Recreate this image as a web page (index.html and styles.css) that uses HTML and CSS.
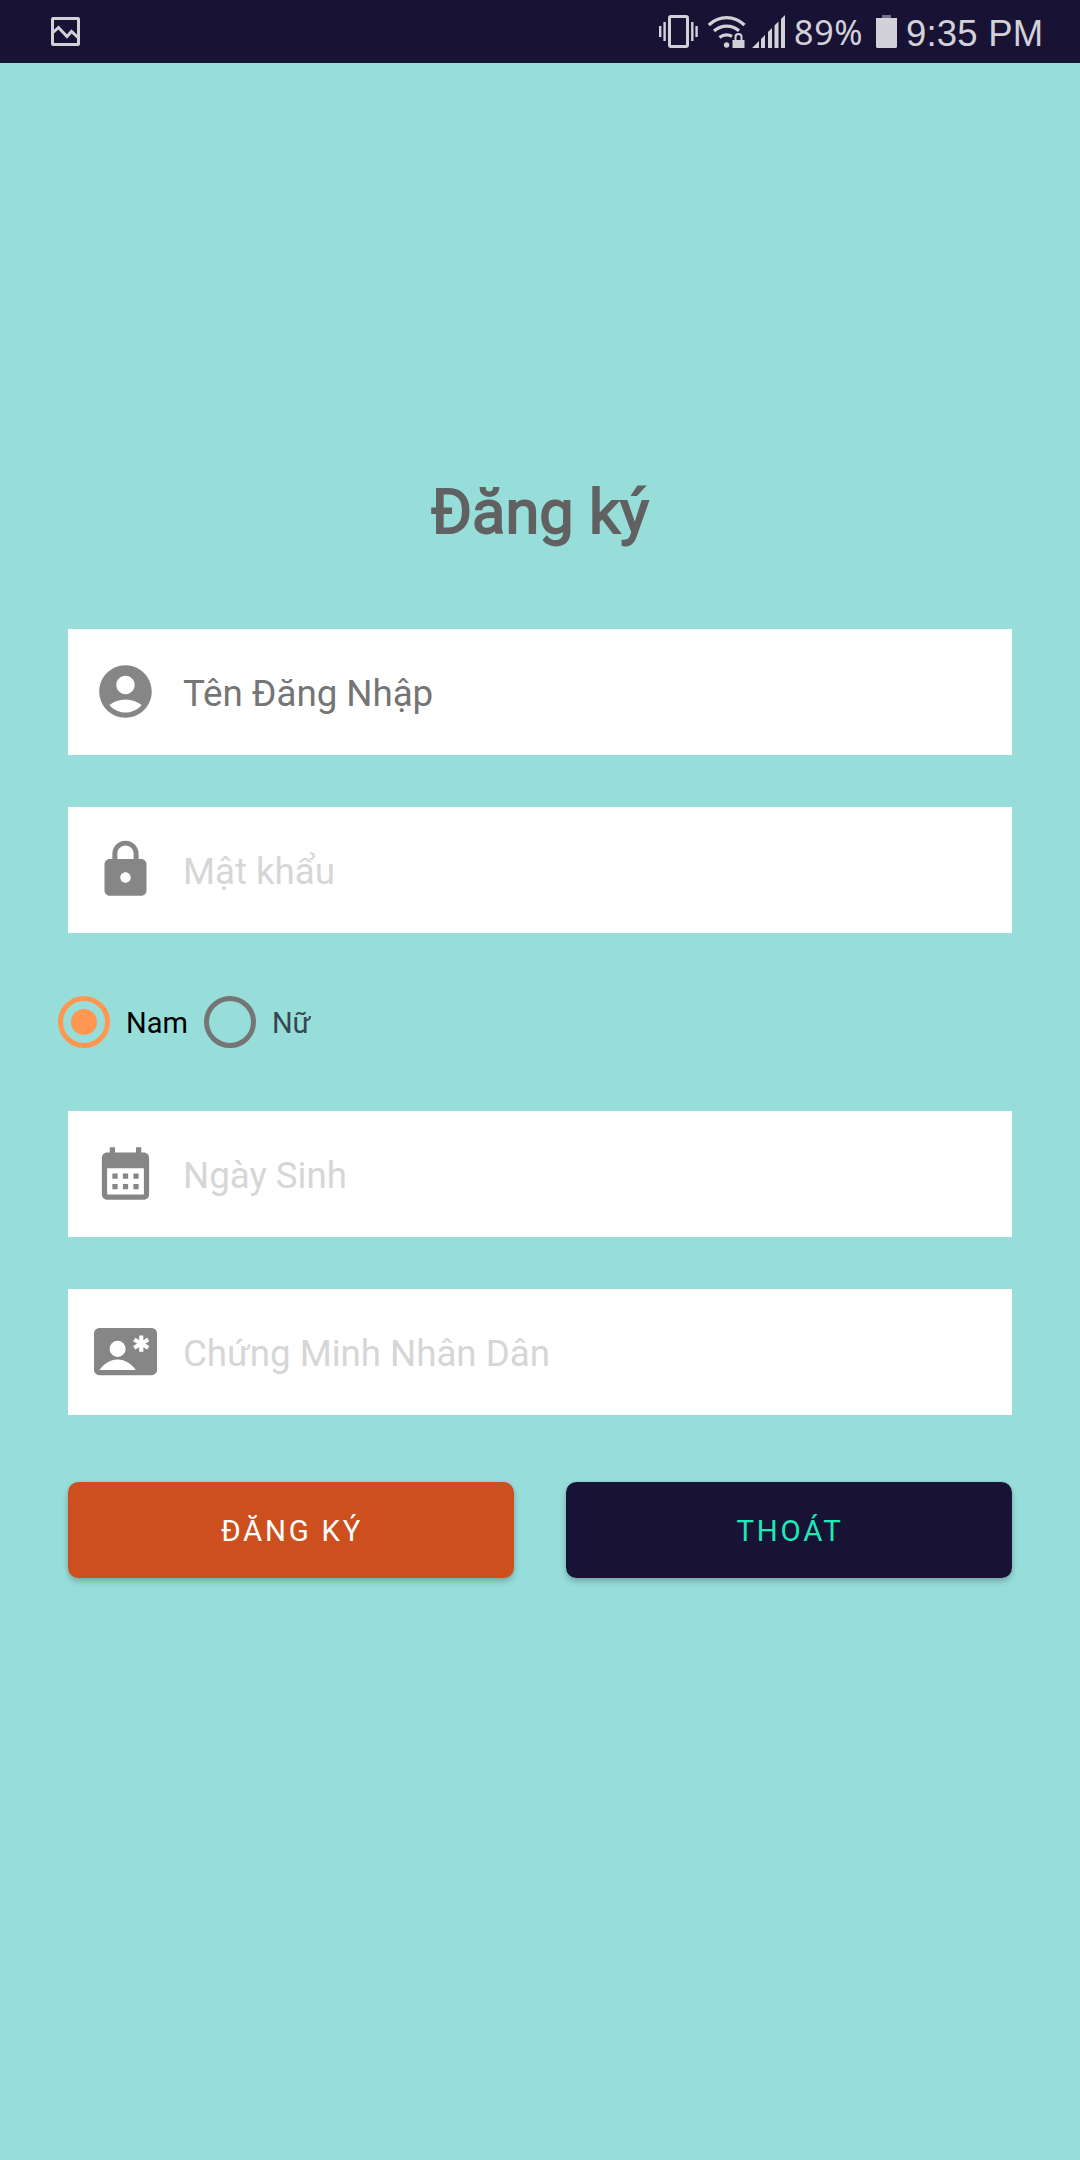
FILE: index.html
```html
<!DOCTYPE html>
<html lang="vi">
<head>
<meta charset="utf-8">
<title>Đăng ký</title>
<link rel="stylesheet" href="styles.css">
</head>
<body>
<header class="status">
  <svg class="status-picture" width="29" height="29" viewBox="0 0 29 29" fill="none" stroke="currentColor" stroke-width="3"><rect x="1.5" y="1.5" width="26" height="26" rx=".5"/><path d="M2 15.5 7.5 10.5 16 19.5 20.5 14.5 27 20.5"/></svg>
  <div class="status-right">
    <svg width="40" height="33" viewBox="0 0 40 33" fill="none" stroke="currentColor"><rect x="10.500" y="1.5" width="18" height="30" rx="1.5" stroke-width="3"/><path d="M1.2 11v11M5.600 7v19M33.300 7v19M37.600 11v11" stroke-width="2.4"/></svg>
    <svg class="wifi" width="38" height="33" viewBox="0 0 38 33" fill="none" stroke="currentColor" stroke-width="3.2"><path d="M.8 10Q8.5 2.6 18.600 2.6T36.500 10M6 16Q11.600 11.100 18.600 11.100 25.600 11.100 31 15.800M11.500 22.500Q14.500 19.900 18.600 19.900 21.500 19.900 24 21.400"/><circle cx="18.600" cy="30" r="2.7" fill="currentColor" stroke="none"/><path d="M24.500 25h12v8h-12z" fill="currentColor" stroke="none"/><path d="M27.500 26v-4a3 3 0 0 1 6 0v4" stroke-width="2"/></svg>
    <svg class="signal" width="33" height="33" viewBox="0 0 33 33" fill="currentColor"><path d="M0 33 7 26v7zM9 24l4-4v13H9zM16 17l4-4v20h-4zM22.500 10.500l4-4V33h-4zM29 4l4-4v33h-4z"/></svg>
    <span class="percent">89%</span>
    <svg class="battery" width="21" height="33" viewBox="0 0 21 33" fill="currentColor"><path d="M6 0h9v3H6z" opacity=".5"/><path d="M0 3h21v29l-1 1H1l-1-1z"/></svg>
    <span class="clock">9:35 PM</span>
  </div>
</header>
<main class="form">
  <h1 class="title">Đăng ký</h1>
  <div class="field active">
    <svg class="icon" viewBox="0 0 24 24"><path d="M12 2C6.480 2 2 6.480 2 12s4.480 10 10 10 10-4.480 10-10S17.520 2 12 2zm0 4c1.930 0 3.500 1.570 3.500 3.500S13.930 13 12 13s-3.500-1.570-3.500-3.500S10.070 6 12 6zm0 14c-2.030 0-4.430-.82-6.140-2.880C7.550 15.800 9.680 15 12 15s4.450.8 6.140 2.120C16.430 19.180 14.030 20 12 20z"/></svg>
    <span class="hint">Tên Đăng Nhập</span>
  </div>
  <div class="field">
    <svg class="icon" viewBox="0 0 24 24"><path d="M18 8h-1V6c0-2.760-2.240-5-5-5S7 3.240 7 6v2H6c-1.100 0-2 .9-2 2v10c0 1.100.9 2 2 2h12c1.100 0 2-.9 2-2V10c0-1.100-.9-2-2-2zm-6 9c-1.100 0-2-.9-2-2s.9-2 2-2 2 .9 2 2-.9 2-2 2zm3.100-9H8.900V6c0-1.710 1.390-3.100 3.100-3.100s3.100 1.390 3.100 3.100v2z"/></svg>
    <span class="hint">Mật khẩu</span>
  </div>
  <div class="radios">
    <div class="radio on"><span class="ring"></span><span class="choice">Nam</span></div>
    <div class="radio"><span class="ring"></span><span class="choice">Nữ</span></div>
  </div>
  <div class="field">
    <svg class="icon" viewBox="0 0 24 24"><path fill-rule="evenodd" d="M6 2h2v2h8V2h2v2h1c1.100 0 2 .9 2 2v14c0 1.100-.9 2-2 2H5c-1.100 0-2-.9-2-2V6c0-1.100.9-2 2-2h1zM5 10v10h14V10z"/><path d="M7 12h2v2H7zM11 12h2v2h-2zM15 12h2v2h-2zM7 16h2v2H7zM11 16h2v2h-2zM15 16h2v2h-2z"/></svg>
    <span class="hint">Ngày Sinh</span>
  </div>
  <div class="field">
    <svg class="icon" viewBox="0 0 24 24"><rect y="3" width="24" height="18" rx="2"/><g fill="#fff"><circle cx="9" cy="11" r="3.050"/><path d="M2.100 19C3.700 16.600 6.200 15 9 15s5.300 1.600 6.900 4z"/></g><path d="M18 5.900v6.200M15.320 7.450l5.360 3.100M20.680 7.450l-5.360 3.100" stroke="#fff" stroke-width="1.600"/></svg>
    <span class="hint">Chứng Minh Nhân Dân</span>
  </div>
  <div class="actions">
    <button class="btn register">ĐĂNG KÝ</button>
    <button class="btn exit">THOÁT</button>
  </div>
</main>
</body>
</html>
```
FILE: styles.css
```css
* { box-sizing: border-box; }
body {
  margin: 0;
  min-height: 2160px;
  background: #97deda;
  font-family: Roboto, "Liberation Sans", sans-serif;
}
svg { display: block; flex: none; }
.status {
  display: flex;
  justify-content: space-between;
  height: 63px;
  padding: 0 37px 0 51px;
  background: #181235;
  color: #d3d1d8;
  white-space: nowrap;
}
.status-picture { margin-top: 17px; }
.status-right { display: flex; width: 384px; padding-top: 15px; }
.wifi { margin-left: 9px; }
.signal { margin-left: 6px; }
.percent {
  width: 69px;
  margin: -1px 0 0 9px;
  font-family: "Noto Sans", sans-serif;
  font-size: 34px;
  line-height: 36px;
  letter-spacing: .7px;
}
.battery { margin-left: 13px; }
.clock {
  margin: 1px 0 0 9px;
  font-family: "Liberation Sans", sans-serif;
  font-size: 36.500px;
  line-height: 36px;
  letter-spacing: .2px;
}
.form { padding: 0 68px; }
.title {
  margin: 0;
  padding-top: 412px;
  height: 566px;
  color: #616161;
  font-size: 61.300px;
  font-weight: 400;
  line-height: 74px;
  text-align: center;
  -webkit-text-stroke: 1.800px #616161;
}
.field {
  display: flex;
  height: 126px;
  margin-bottom: 52px;
  padding: 31px 26px 0;
  gap: 26px;
  background: #fff;
  color: #d6d6d6;
}
.field.active { color: #757575; }
.icon { width: 63px; height: 63px; fill: #868686; }
.hint {
  padding-top: 12px;
  font-size: 36.750px;
  letter-spacing: -.05px;
  line-height: 44px;
  white-space: nowrap;
}
.radios {
  display: flex;
  height: 74px;
  margin: 0 0 52px -10px;
  padding-top: 11px;
  gap: 16px;
}
.radio {
  display: flex;
  align-items: center;
  height: 52px;
  gap: 16px;
  color: #37474f;
  font-size: 29px;
}
.radio.on { color: #000; }
.choice { padding-top: 2px; }
.ring {
  display: flex;
  width: 52px;
  height: 52px;
  border: 5.250px solid #757575;
  border-radius: 50%;
}
.on .ring { border-color: #ff9751; }
.on .ring::after {
  content: "";
  width: 26px;
  height: 26px;
  margin: auto;
  border-radius: 50%;
  background: #ff9751;
}
.actions { display: flex; gap: 52px; padding-top: 15px; }
.btn {
  flex: 1;
  height: 96px;
  padding: 1px 0 0 2px;
  border: 0;
  border-radius: 10.500px;
  font: 400 29.400px Roboto, sans-serif;
  letter-spacing: 2.750px;
  box-shadow: 0 4px 6px rgba(0, 0, 0, .2), 0 0 4px rgba(0, 0, 0, .08);
}
.register { background: #cd4f1d; color: #fff; }
.exit { background: #181235; color: #1de9b6; }
```
